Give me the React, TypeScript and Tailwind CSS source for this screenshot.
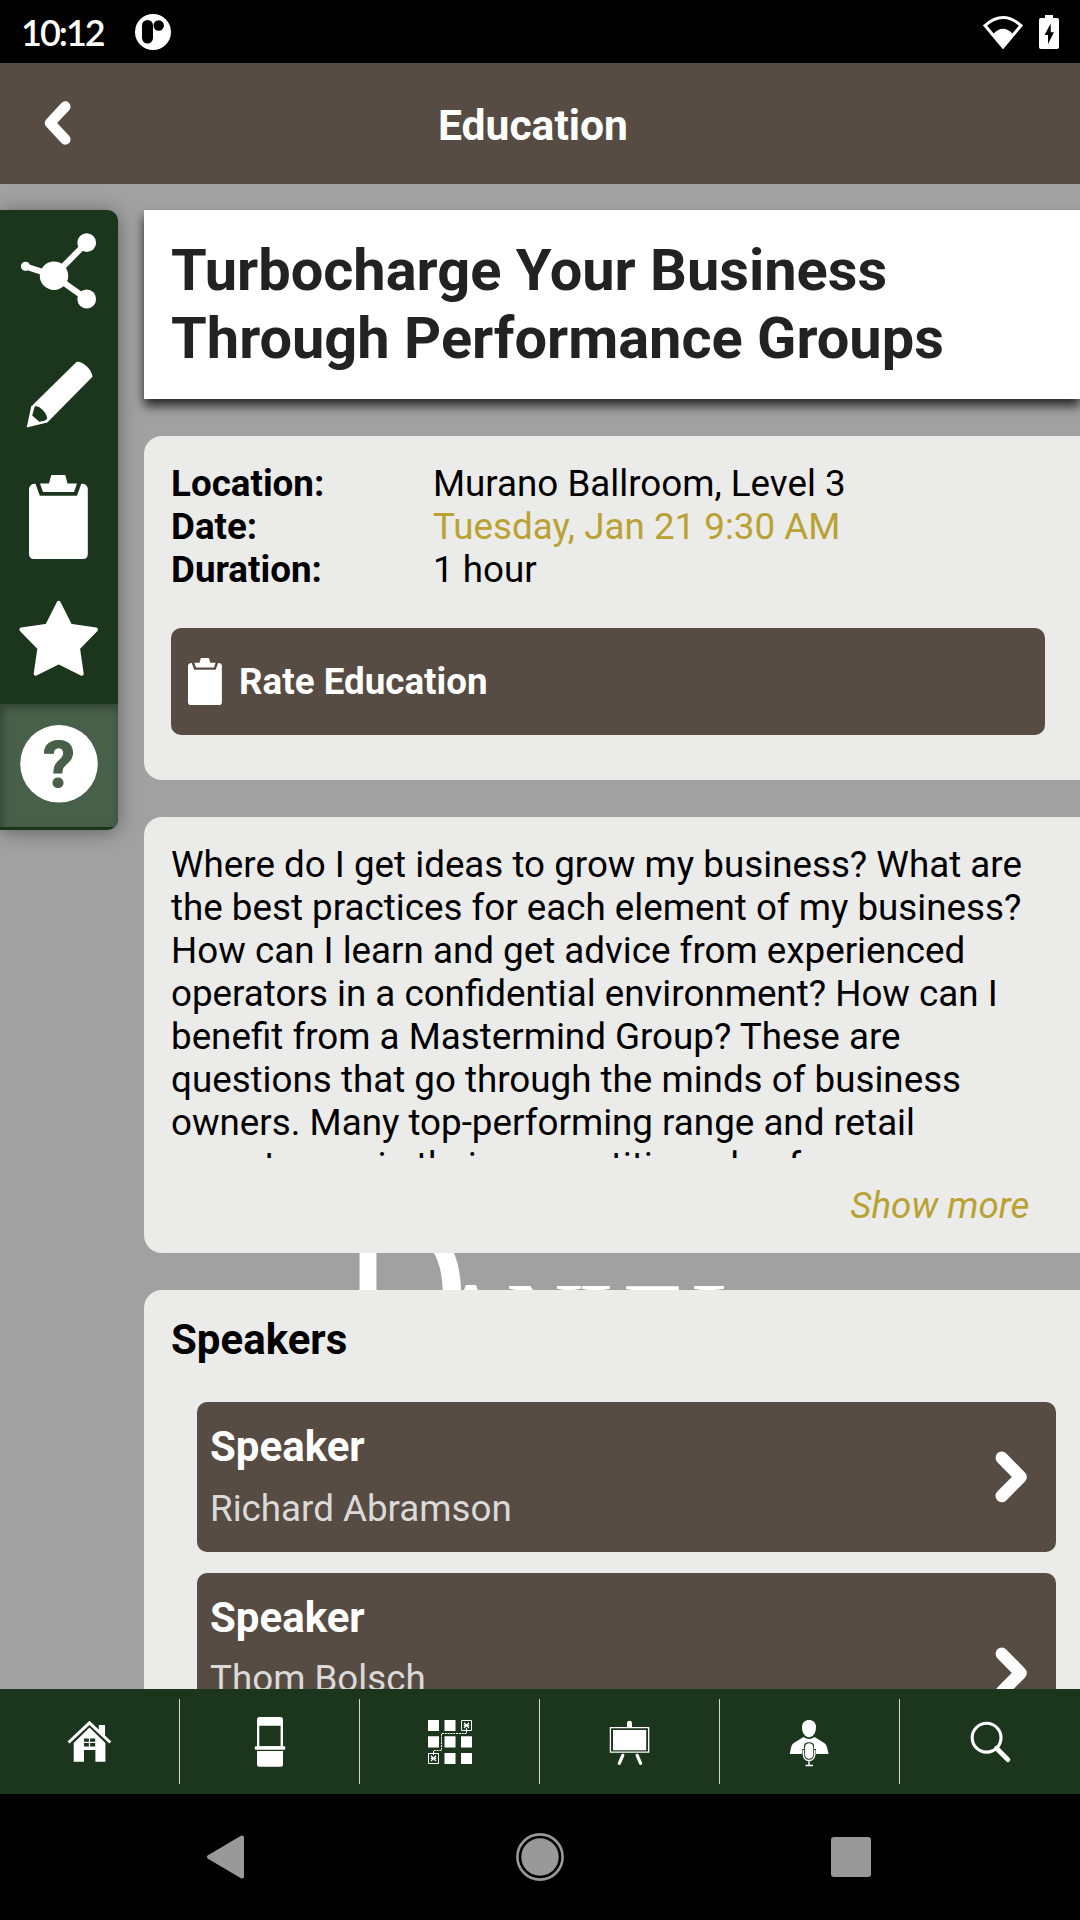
import React from "react";

function Clipboard({ className }: { className: string }) {
  return (
    <svg className={className} viewBox="0 0 59 84" preserveAspectRatio="none" fill="#fff">
      <path d="M22.3 0H36.3L38.5 8.5H48L45 17H14L11 8.5H20Z" />
      <path d="M0 13.5Q1 8.5 6.5 8.8L10.8 20.8H48L52.3 8.8Q58 8.5 58.8 13.5V79Q58.8 84 54 84H5Q0 84 0 79Z" />
    </svg>
  );
}

function ChevronRight() {
  return (
    <svg className="h-[52px] w-[33px]" viewBox="0 0 33 52" fill="none" stroke="#fff" strokeWidth="12.5" strokeLinecap="round" strokeLinejoin="round">
      <path d="M6.8 6.8 25.6 26 6.8 45" />
    </svg>
  );
}

function StatusBar() {
  return (
    <div className="flex h-[63px] shrink-0 items-center justify-between bg-black pl-[21px] pr-[20px]">
      <div className="flex items-center">
        <span className="w-[114px] whitespace-nowrap pt-[2px] font-['Lato'] text-[36px] font-semibold leading-[61px] tracking-[-2px] text-white">10:12</span>
        <svg className="h-9 w-9" viewBox="0 0 36 36">
          <circle cx="18" cy="18" r="18" fill="#fff" />
          <rect x="7" y="6" width="11" height="23.5" rx="5.5" />
          <circle cx="23.7" cy="11.5" r="5.2" />
        </svg>
      </div>
      <div className="flex items-center gap-[15px]">
        <svg className="h-[34px] w-[40px]" viewBox="0 0 40 34">
          <path d="M2 10.5Q20-5.5 38 10.5L20 32Z" fill="none" stroke="#fff" strokeWidth="3" />
          <path d="M10.5 18.5Q20 9 29.5 18.5L20 33Z" fill="#fff" />
        </svg>
        <svg className="h-[34px] w-[22px]" viewBox="0 0 22 34">
          <path d="M7 0H15V3H19Q21 3 21 5V32Q21 34 19 34H3Q1 34 1 32V5Q1 3 3 3H7Z" fill="#fff" />
          <path d="M12.7 8.5 6.5 20H10V29L16 17.2H12.7Z" fill="#000" />
        </svg>
      </div>
    </div>
  );
}

function Header() {
  return (
    <header className="flex h-[121px] shrink-0 items-center bg-[#574c43]">
      <div className="flex w-[144px] pb-[2px] pl-[44px]">
        <svg className="h-[44px] w-[27px]" viewBox="0 0 27 44" fill="none" stroke="#fff" strokeWidth="10.5" strokeLinecap="round" strokeLinejoin="round">
          <path d="M21.3 5.6 6 22 21.3 38.4" />
        </svg>
      </div>
      <h1 className="w-[778px] pt-[3px] text-center text-[42.6px] font-bold leading-[49px] text-white">Education</h1>
    </header>
  );
}

function SideMenu() {
  return (
    <nav className="z-10 h-[620px] w-[118px] overflow-hidden rounded-r-[11px] bg-[#1c361e]">
      <svg className="h-[123.5px] w-[118px]" viewBox="0 210 118 123.5" fill="#fff">
        <path d="M25.3 266.3 54 275.7 86.7 242.7M54 275.7 86.7 299" fill="none" stroke="#fff" strokeWidth="6" />
        <circle cx="25.5" cy="266.3" r="4.6" />
        <circle cx="54" cy="275.7" r="14.2" />
        <circle cx="86.7" cy="242.7" r="9.4" />
        <circle cx="86.7" cy="299" r="9.4" />
      </svg>
      <svg className="h-[123.5px] w-[118px]" viewBox="0 333.5 118 123.5">
        <path d="M76.7 361.2C83 360.5 92 369 92.5 376.3L47.3 422 26.7 427 31.2 406Z" fill="#fff" />
        <path d="M34.7 406C39 404.5 46.5 412 47.2 417.5 46.5 420.5 43 420.5 39.3 421.3L32.2 415Z" fill="#1c361e" />
      </svg>
      <div className="flex h-[123.5px] pl-[29px] pt-[18px]">
        <Clipboard className="h-[84px] w-[59px]" />
      </div>
      <svg className="h-[123.5px] w-[118px]" viewBox="0 580.5 118 123.5">
        <path d="M58.7 602.3 70.2 625.2 96 629 78 647.7 81.7 673.2 58.7 661.8 35.7 673.2 39.4 647.7 21.4 629 47.2 625.2Z" fill="#fff" stroke="#fff" strokeWidth="4" strokeLinejoin="round" />
      </svg>
      <div className="h-[123px] bg-[#48604a] shadow-[inset_2px_4px_8px_rgba(0,0,0,0.3)]">
        <svg className="h-[123px] w-[118px]" viewBox="0 704 118 123">
          <circle cx="59" cy="763.8" r="38.8" fill="#fff" />
          <text x="59" y="787" textAnchor="middle" fill="#48604a" stroke="#48604a" strokeWidth="1" fontFamily="Roboto" fontWeight="700" fontSize="64">?</text>
        </svg>
      </div>
    </nav>
  );
}

function Logo() {
  return (
    <svg className="absolute left-[340px] top-[1010px] h-[180px] w-[420px]" viewBox="340 1194 420 180" fill="#fff" fontFamily="Liberation Serif">
      <text transform="translate(339.5 1374) scale(0.755 1)" fontSize="236">D</text>
      <text x="433 506 578 623 691" y="1357" fontSize="107">ANIEL</text>
    </svg>
  );
}

const details = [
  { label: "Location:", value: "Murano Ballroom, Level 3", color: "text-black" },
  { label: "Date:", value: "Tuesday, Jan 21 9:30 AM", color: "text-[#b9a233]" },
  { label: "Duration:", value: "1 hour", color: "text-black" },
];

const speakers = [
  { name: "Richard Abramson", height: "h-[150px]", nameGap: "mt-4" },
  { name: "Thom Bolsch", height: "h-[200px]", nameGap: "mt-[15px]" },
];

function Content() {
  return (
    <main className="z-10 ml-[26px] flex w-[936px] flex-col">
      <h2 className="h-[189px] shrink-0 bg-white px-[27px] pt-[26px] text-[57.75px] font-bold leading-[68px] text-[#222] shadow-[0_7px_10px_rgba(0,0,0,0.75)]">
        Turbocharge Your Business<br />Through Performance Groups
      </h2>

      <section className="mt-[37px] h-[344px] shrink-0 rounded-l-[18px] bg-[#ebebe9] pl-[27px] pr-[35px] pt-[26px]">
        <dl className="grid grid-cols-[262px_1fr] text-[36.75px] leading-[43px]">
          {details.map((d) => (
            <React.Fragment key={d.label}>
              <dt className="font-bold">{d.label}</dt>
              <dd className={d.color}>{d.value}</dd>
            </React.Fragment>
          ))}
        </dl>
        <button className="mt-[37px] flex h-[107px] w-full items-center rounded-[10px] bg-[#574c43] pl-[17px] text-[36.75px] font-bold text-white">
          <Clipboard className="h-[47px] w-[34px]" />
          <span className="ml-[17px]">Rate Education</span>
        </button>
      </section>

      <section className="mt-[37px] h-[436px] shrink-0 rounded-l-[18px] bg-[#ebebe9] px-[27px] pt-[26px] text-[36.75px] leading-[43px]">
        <p className="h-[315px] overflow-hidden whitespace-nowrap">
          Where do I get ideas to grow my business? What are<br />
          the best practices for each element of my business?<br />
          How can I learn and get advice from experienced<br />
          operators in a confidential environment? How can I<br />
          benefit from a Mastermind Group? These are<br />
          questions that go through the minds of business<br />
          owners. Many top-performing range and retail<br />
          operators gain their competitive edge from
        </p>
        <p className="pr-[23.5px] pt-[26px] text-right italic text-[#b9a233]">Show more</p>
      </section>

      <section className="mt-[37px] h-[510px] shrink-0 rounded-l-[18px] bg-[#ebebe9] pl-[27px] pr-[24px] pt-[25px]">
        <h3 className="text-[42px] font-bold leading-[49px]">Speakers</h3>
        <ul className="ml-[26px] mt-[38px] flex flex-col gap-[21px]">
          {speakers.map((s) => (
            <li key={s.name} className={`flex items-center justify-between rounded-[10px] bg-[#574c43] pl-[13px] pr-[28px] ${s.height}`}>
              <div className="self-start pt-5">
                <div className="text-[42px] font-bold leading-[49px] text-white">Speaker</div>
                <div className={`text-[36.75px] leading-[43px] text-[#dcdad8] ${s.nameGap}`}>{s.name}</div>
              </div>
              <ChevronRight />
            </li>
          ))}
        </ul>
      </section>
    </main>
  );
}

const tabIcons = [
  <g>
    <path d="M38.8 14H45V27L38.8 21Z" />
    <path d="M8.5 31.5 29.5 11.8 50.3 31.5" fill="none" stroke="#fff" strokeWidth="3" />
    <path d="M29.5 16.5 45.4 32V50.7H35.4V39H24V50.7H13.7V32Z" />
    <path d="M24 27.5H28.9V30.8H24ZM30.1 27.5H35.2V30.8H30.1ZM24 32H28.9V35.5H24ZM30.1 32H35.2V35.5H30.1Z" fill="#1c361e" />
  </g>,
  <g>
    <path fillRule="evenodd" d="M19 6H41Q43 6 43 8.5V36H17V8.5Q17 6 19 6ZM19.3 14.8V35.3H40.6V14.8Z" />
    <rect x="14.8" y="35.3" width="30.4" height="3.4" rx="1" />
    <path d="M17 40H43V53.5Q43 55.8 41 55.8H19Q17 55.8 17 53.5Z" />
  </g>,
  <g>
    <path d="M8 9H19V20H8ZM24.5 9H35.5V20H24.5ZM8 25.3H19V36.5H8ZM24.5 25.3H35.5V36.5H24.5ZM41 25.3H52V36.5H41ZM24.5 42H35.5V53H24.5ZM41 42H52V53H41Z" />
    <g fill="none" stroke="#fff">
      <path d="M41.5 9.5H51.5V19.5H41.5ZM8.5 42.5H18.5V52.5H8.5Z" />
      <path d="M46.5 17V22.5H21.5V39.5H13.5V44" strokeDasharray="2 0.8" />
      <path d="M44 11.8 49 17M49 11.8 44 17M43.7 14.4H49.3M11 44.8 16 50M16 44.8 11 50M10.7 47.4H16.3" strokeWidth="1.3" />
    </g>
  </g>,
  <g>
    <path d="M27 16V12Q27 9.7 29.5 9.7T32 12V16Z" />
    <path d="M10.4 16.6H48.7V41.2H10.4Z" fill="none" stroke="#fff" strokeWidth="1.3" />
    <path d="M13 19H46.2V39.3H13Z" />
    <path d="M22.8 44.3 19.3 52.4M37.2 44.3 40.6 52.4" stroke="#fff" strokeWidth="3.2" strokeLinecap="round" />
  </g>,
  <g>
    <path d="M22 16C22 6.7 36 6.7 36 16 36 29.5 22 29.5 22 16Z" />
    <path d="M23.5 26Q29 30 34.5 26L43 31.2Q46 32.8 46.8 35.5L48.6 43H9.7L11.3 35.5Q12 32.8 15 31.2Z" />
    <path d="M24 38V34.5Q24.5 31.2 29 31.2T34 34.5V38H36V43Q36 49 29 49T22.2 43V38Z" fill="#1c361e" />
    <rect x="25.2" y="32.5" width="7.8" height="15" rx="3.9" stroke="#fff" strokeWidth="0.5" />
    <path d="M23.4 39V43Q23.4 49.5 29 49.5T34.8 43V39M29 49.5V54M25.5 54.5H33" fill="none" stroke="#fff" strokeWidth="1.4" />
  </g>,
  <g fill="none" stroke="#fff">
    <circle cx="26.6" cy="26.7" r="14.4" strokeWidth="3.1" />
    <path d="M36.5 37.2 47.9 48.6" strokeWidth="4.8" strokeLinecap="round" />
  </g>,
];

function TabBar() {
  return (
    <nav className="z-20 flex h-[105px] shrink-0 items-center bg-[#1c361e]">
      {tabIcons.map((icon, i) => (
        <div key={i} className={`flex h-[85px] w-[180px] items-center ${i < 5 ? "border-r border-[#d0d6d0]" : ""}`}>
          <svg className="ml-[60px] h-[61px] w-[60px]" viewBox="0 0 60 61" fill="#fff">{icon}</svg>
        </div>
      ))}
    </nav>
  );
}

function SystemNav() {
  return (
    <nav className="flex h-[126px] items-center justify-between bg-black pl-[206px] pr-[209px]">
      <svg className="h-11 w-[38px]" viewBox="0 0 38 44" fill="#999">
        <path d="M3 22 36 2.5V41.5Z" stroke="#999" strokeWidth="4" strokeLinejoin="round" />
      </svg>
      <svg className="ml-[4px] h-12 w-12" viewBox="0 0 48 48" fill="#999">
        <circle cx="24" cy="24" r="18.7" />
        <circle cx="24" cy="24" r="22.6" fill="none" stroke="#999" strokeWidth="2.6" />
      </svg>
      <div className="h-10 w-10 rounded-[3px] bg-[#999]" />
    </nav>
  );
}

export default function App() {
  return (
    <div className="flex h-[1920px] w-[1080px] flex-col overflow-hidden bg-black font-['Roboto',sans-serif] text-black">
      <StatusBar />
      <Header />
      <div className="relative flex h-[1505px] shrink-0 items-start overflow-hidden bg-[#a1a1a1] pt-[26px]">
        <Logo />
        <div className="z-10 rounded-r-[11px] shadow-[0_2px_20px_rgba(0,0,0,0.4)]">
          <SideMenu />
        </div>
        <Content />
      </div>
      <TabBar />
      <SystemNav />
    </div>
  );
}
